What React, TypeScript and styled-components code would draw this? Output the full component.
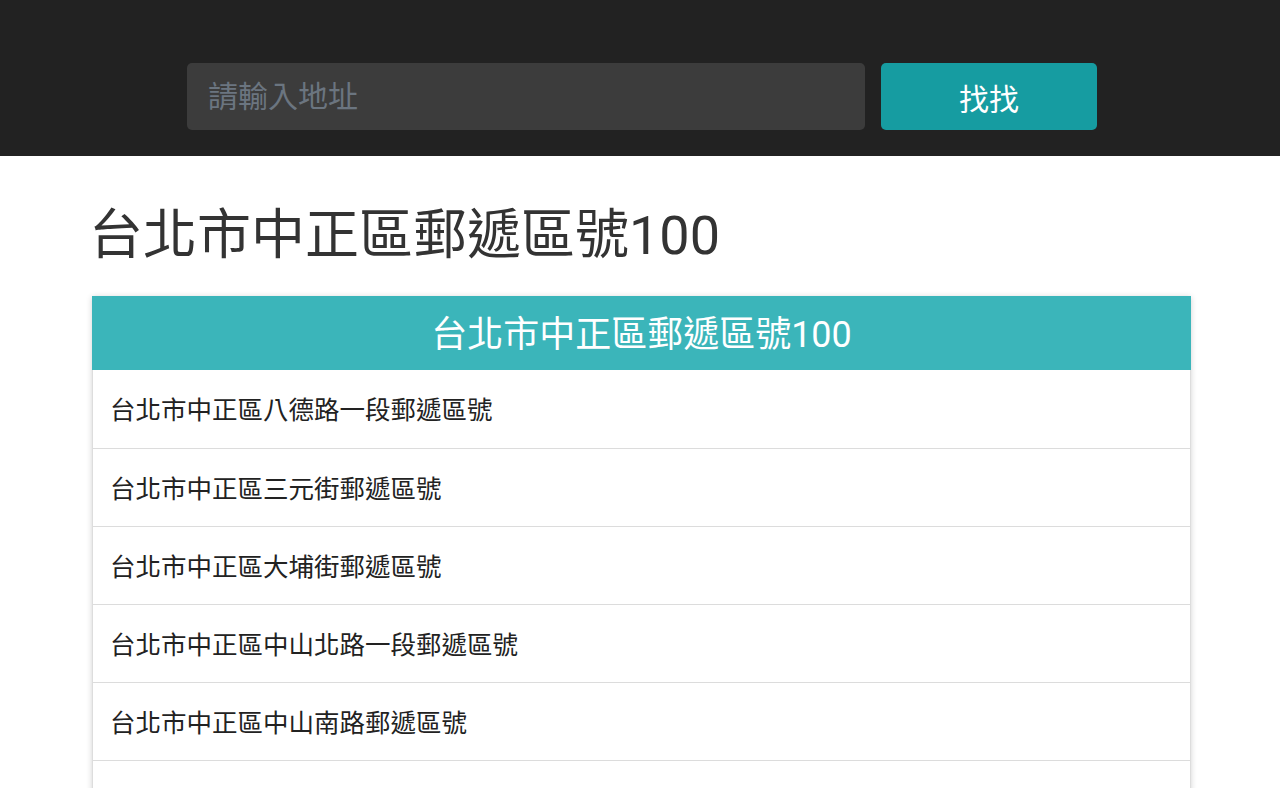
import React from "react";
import styled, { createGlobalStyle } from "styled-components";

const Global = createGlobalStyle`
  html, body { margin: 0; padding: 0; background: #fff; }
  body { font-family: Roboto, "Noto Sans CJK TC", "Noto Sans", sans-serif; color: #333; }
  * { box-sizing: border-box; }
`;

const Header = styled.header`
  background: #222222;
  display: flex;
  align-items: center;
  justify-content: center;
  gap: 16px;
  padding: 63px 0 26px 4px;
`;

const SearchInput = styled.input`
  width: 678px;
  height: 67px;
  border: none;
  border-radius: 5px;
  background: #3c3c3c;
  padding: 0 21px;
  font-family: Roboto, "Noto Sans CJK TC", sans-serif;
  font-size: 30px;
  color: #eee;
  outline: none;
  &::placeholder { color: #6b7580; }
`;

const SearchButton = styled.button`
  width: 216px;
  height: 67px;
  border: none;
  border-radius: 5px;
  background: #169ca1;
  color: #fff;
  font-family: Roboto, "Noto Sans CJK TC", sans-serif;
  font-size: 30px;
  padding: 0;
  cursor: pointer;
`;

const Main = styled.main`
  padding: 0 89px 0 92px;
`;

const Title = styled.h1`
  margin: 47px 0 28px -3px;
  font-size: 54px;
  line-height: 65px;
  font-weight: 400;
  color: #333;
`;

const Card = styled.section`
  border: 1px solid #ddd;
  box-shadow: 0 1px 6px rgba(0, 0, 0, 0.18);
  background: #fff;
`;

const CardHeader = styled.div`
  height: 74px;
  background: #3bb5ba;
  color: #fff;
  font-size: 36px;
  padding-bottom: 4px;
  display: flex;
  align-items: center;
  justify-content: center;
  margin: -1px -1px 0;
`;

const Row = styled.div`
  height: 78px;
  display: flex;
  align-items: center;
  padding: 0 17px 3px;
  font-size: 25.5px;
  color: #222;
  border-top: 1px solid #dcdcdc;
  &:first-of-type { border-top: none; }
`;

const rows = [
  "台北市中正區八德路一段郵遞區號",
  "台北市中正區三元街郵遞區號",
  "台北市中正區大埔街郵遞區號",
  "台北市中正區中山北路一段郵遞區號",
  "台北市中正區中山南路郵遞區號",
  "台北市中正區中華路一段郵遞區號",
];

export default function App() {
  return (
    <>
      <Global />
      <Header>
        <SearchInput placeholder="請輸入地址" />
        <SearchButton>找找</SearchButton>
      </Header>
      <Main>
        <Title>台北市中正區郵遞區號100</Title>
        <Card>
          <CardHeader>台北市中正區郵遞區號100</CardHeader>
          <div>
            {rows.map((r) => (
              <Row key={r}>{r}</Row>
            ))}
          </div>
        </Card>
      </Main>
    </>
  );
}
